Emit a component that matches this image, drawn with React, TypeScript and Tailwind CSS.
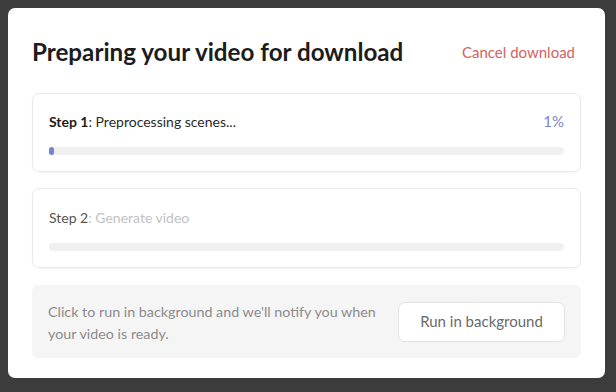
export default function App() {
    return (
        <div
            className="w-[616px] h-[392px] bg-[#3c3c3d] pt-[8px] pl-[8px] overflow-hidden"
            style={{ fontFamily: 'Lato, "Noto Sans", sans-serif' }}
        >
            <div className="w-[597px] h-[370px] bg-white rounded-[7px] px-[24px] pt-[28px] pb-[20px] flex flex-col">
                <div className="flex items-center justify-between h-[32px]">
                    <h1 className="text-[24.2px] leading-[32px] font-bold text-[#1c1c1c]">
                        Preparing your video for download
                    </h1>
                    <button className="text-[15px] text-[#d4625f] mr-[6px]">Cancel download</button>
                </div>

                <div className="mt-[25px] border border-[#e9e9e9] rounded-[7px] pt-[17px] pb-[16px] px-[16px] shadow-[0_1px_2px_rgba(0,0,0,0.04)]">
                    <div className="flex items-center justify-between h-[20px]">
                        <p className="text-[14px] text-[#2a2a2a]">
                            <span className="font-bold text-[#1c1c1c]">Step 1</span>: Preprocessing scenes...
                        </p>
                        <span className="text-[15px] text-[#7b85cc]">1%</span>
                    </div>
                    <div className="mt-[16px] h-[8px] rounded-full bg-[#f0f0f0]">
                        <div className="h-[8px] w-[5px] rounded-full bg-[#7b83cf]" />
                    </div>
                </div>

                <div className="mt-[16px] border border-[#e9e9e9] rounded-[7px] pt-[18px] pb-[16px] px-[16px] shadow-[0_1px_2px_rgba(0,0,0,0.04)]">
                    <div className="flex items-center h-[20px] text-[14px]">
                        <p className="text-[#c2c2c2]">
                            <span className="text-[#555555]">Step 2</span>: Generate video
                        </p>
                    </div>
                    <div className="mt-[16px] h-[8px] rounded-full bg-[#f0f0f0]" />
                </div>

                <div className="mt-[17px] bg-[#f5f5f5] rounded-[6px] pl-[16px] pr-[16px] h-[73px] flex items-center justify-between">
                    <p className="text-[14.3px] leading-[22px] text-[#8c8c8c] w-[335px] mt-[2px]">
                        Click to run in background and we'll notify you when your video is ready.
                    </p>
                    <button className="w-[167px] h-[40px] bg-white border border-[#e2e2e2] rounded-[7px] text-[15px] text-[#6a6a6a]">
                        Run in background
                    </button>
                </div>
            </div>
        </div>
    );
}
